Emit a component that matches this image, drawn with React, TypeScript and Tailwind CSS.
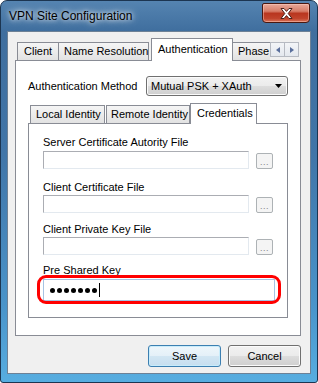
import React from "react";

const tabBg =
  "bg-[linear-gradient(to_bottom,#f5f5f5_0%,#ececec_50%,#e2e2e2_100%)]";
const btnBg =
  "bg-[linear-gradient(to_bottom,#f2f2f2_0%,#ebebeb_50%,#dddddd_50%,#cfcfcf_100%)]";

function FileRow({
  label,
  labelMt,
  inputMt,
}: {
  label: string;
  labelMt: string;
  inputMt: string;
}) {
  return (
    <div className="flex flex-col">
      <div className={`${labelMt} h-[13px] whitespace-nowrap text-[11px] leading-[13px] text-black`}>
        {label}
      </div>
      <div className={`${inputMt} flex items-end gap-[7px]`}>
        <div className="h-[18px] w-[206px] border border-t-[#abadb3] border-l-[#abadb3] border-r-[#e3e9ef] border-b-[#e3e9ef] bg-white" />
        <div className="flex h-[16px] w-[17px] items-end justify-center rounded-[2px] border border-[#adb2b5] bg-[#f4f4f4] pb-[1px] text-[9px] leading-[9px] tracking-[0.5px] text-[#838383]">
          ...
        </div>
      </div>
    </div>
  );
}

export default function App() {
  return (
    <div className="font-['Liberation_Sans',Arial,sans-serif] text-black">
      <div className="flex h-[383px] w-[318px] flex-col rounded-t-[7px] rounded-b-[3px] border border-[#1c3551] bg-[linear-gradient(to_bottom,#5584b1_0%,#3f6e9e_8%,#4175a8_40%,#4a94ca_80%,#57ade0_100%)] px-[6px] pb-[8px]">
        {/* title bar */}
        <div className="flex h-[30px] items-start justify-between">
          <div className="pl-[2px] pt-[8px] text-[12px] leading-[15px] text-black [text-shadow:0_0_8px_rgba(255,255,255,0.95),0_0_4px_rgba(255,255,255,0.9)]">
            VPN Site Configuration
          </div>
          <div className="mr-[1px] mt-[2px] flex h-[20px] w-[48px] items-center justify-center rounded-b-[4px] rounded-t-[2px] border border-[#4a1810] bg-[linear-gradient(to_bottom,#e9a99a_0%,#d77d68_40%,#b9361f_52%,#c0432b_80%,#d9745a_100%)] shadow-[inset_0_0_0_1px_rgba(255,210,200,0.45)]">
            <svg width="13" height="11" viewBox="0 0 13 11">
              <polygon
                points="1,0.5 4,0.5 6.5,3.4 9,0.5 12,0.5 8.2,5.5 12,10.5 9,10.5 6.5,7.6 4,10.5 1,10.5 4.8,5.5"
                fill="#ffffff"
                stroke="#4d2018"
                strokeWidth="1"
                strokeLinejoin="round"
              />
            </svg>
          </div>
        </div>

        {/* client area */}
        <div className="flex flex-1 flex-col border border-[#6d8196] bg-[#f0f0f0]">
          {/* outer tabs */}
          <div className="ml-[7px] mt-[6px] flex h-[22px] items-end pl-[2px]">
            <div className={`h-[18px] w-[42px] whitespace-nowrap border border-b-0 border-[#898c95] ${tabBg} pl-[6px] text-[11px] leading-[17px]`}>
              Client
            </div>
            <div className={`h-[18px] w-[90px] whitespace-nowrap border border-b-0 border-l-0 border-[#898c95] ${tabBg} pl-[5px] text-[11px] leading-[17px]`}>
              Name Resolution
            </div>
            <div className="relative z-10 mb-[-1px] ml-[2px] h-[23px] w-[82px] whitespace-nowrap border border-b-0 border-[#898c95] bg-white pl-[6px] text-[11px] leading-[20px]">
              Authentication
            </div>
            <div className={`h-[18px] w-[37px] overflow-hidden whitespace-nowrap border border-b-0 border-r-0 border-l-0 border-[#898c95] ${tabBg} pl-[5px] text-[11px] leading-[17px]`}>
              Phase
            </div>
            <div className="mt-[4px] flex self-start">
              <div className="flex h-[15px] w-[15px] items-center justify-center border border-[#b6bac2] bg-[linear-gradient(to_bottom,#f3f5f8,#e4e8ee)]">
                <svg width="4" height="6" viewBox="0 0 4 6">
                  <polygon points="4,0 4,6 0,3" fill="#5a6f9c" />
                </svg>
              </div>
              <div className="-ml-px flex h-[15px] w-[15px] items-center justify-center border border-[#b6bac2] bg-[linear-gradient(to_bottom,#f3f5f8,#e4e8ee)]">
                <svg width="4" height="6" viewBox="0 0 4 6">
                  <polygon points="0,0 4,3 0,6" fill="#5a6f9c" />
                </svg>
              </div>
            </div>
          </div>

          {/* outer panel */}
          <div className="ml-[7px] flex h-[276px] w-[286px] flex-col border border-[#898c95] bg-white px-[12px] pt-[15px]">
            <div className="flex h-[20px] items-center justify-between">
              <span className="whitespace-nowrap text-[11px] leading-[13px]">Authentication Method</span>
              <div className={`flex h-[20px] w-[142px] items-center justify-between rounded-[3px] border border-[#707070] ${btnBg} pl-[4px] pr-[5px] shadow-[inset_0_0_0_1px_#fbfbfb]`}>
                <span className="whitespace-nowrap text-[11px] leading-[13px]">Mutual PSK + XAuth</span>
                <svg width="7" height="4" viewBox="0 0 7 4">
                  <polygon points="0,0 7,0 3.5,4" fill="#000" />
                </svg>
              </div>
            </div>

            {/* inner tabs */}
            <div className="mt-[7px] flex h-[20px] items-end pl-[2px]">
              <div className={`h-[18px] w-[75px] whitespace-nowrap border border-b-0 border-[#898c95] ${tabBg} pl-[5px] text-[11px] leading-[17px]`}>
                Local Identity
              </div>
              <div className={`ml-[1px] h-[18px] w-[84px] whitespace-nowrap border border-b-0 border-[#898c95] ${tabBg} pl-[4px] text-[11px] leading-[17px]`}>
                Remote Identity
              </div>
              <div className="relative z-10 mb-[-1px] h-[21px] w-[67px] whitespace-nowrap border border-b-0 border-[#898c95] bg-white pl-[6px] text-[11px] leading-[18px]">
                Credentials
              </div>
            </div>

            {/* inner panel */}
            <div className="flex h-[195px] flex-col border border-[#898c95] bg-white pl-[14px] pt-[12px]">
              <FileRow label="Server Certificate Autority File" labelMt="mt-0" inputMt="mt-[2px]" />
              <FileRow label="Client Certificate File" labelMt="mt-[12px]" inputMt="mt-[1px]" />
              <FileRow label="Client Private Key File" labelMt="mt-[10px]" inputMt="mt-[1px]" />

              <div className="mt-[9px] h-[13px] whitespace-nowrap text-[11px] leading-[13px]">Pre Shared Key</div>
              <div className="relative mt-[2px] h-[22px] w-[232px]">
                <div className="flex h-[22px] w-[232px] items-center border border-[#a6c3e3] bg-white pl-[6px]">
                  <div className="flex items-center gap-[2px]">
                    <span className="h-[5px] w-[5px] rounded-full bg-black" />
                    <span className="h-[5px] w-[5px] rounded-full bg-black" />
                    <span className="h-[5px] w-[5px] rounded-full bg-black" />
                    <span className="h-[5px] w-[5px] rounded-full bg-black" />
                    <span className="h-[5px] w-[5px] rounded-full bg-black" />
                    <span className="h-[5px] w-[5px] rounded-full bg-black" />
                    <span className="h-[5px] w-[5px] rounded-full bg-black" />
                  </div>
                  <span className="ml-[2px] h-[14px] w-[1px] bg-black" />
                </div>
                <div className="pointer-events-none absolute left-[-6px] top-[-4px] h-[29px] w-[244px] rounded-[9px] border-[3px] border-[#ff0000]" />
              </div>
            </div>
          </div>

          {/* buttons */}
          <div className="mr-[9px] mt-[9px] flex justify-end gap-[7px]">
            <div className="flex h-[22px] w-[73px] items-center justify-center rounded-[3px] border border-[#3c7fb1] bg-[linear-gradient(to_bottom,#eef6fb_0%,#e4f0f8_50%,#d2e6f3_50%,#c6deef_100%)] text-[11px] leading-[13px] shadow-[inset_0_0_0_1px_#c8ecfb]">
              Save
            </div>
            <div className={`flex h-[22px] w-[73px] items-center justify-center rounded-[3px] border border-[#707070] ${btnBg} text-[11px] leading-[13px] shadow-[inset_0_0_0_1px_#fbfbfb]`}>
              Cancel
            </div>
          </div>
        </div>
      </div>
    </div>
  );
}
